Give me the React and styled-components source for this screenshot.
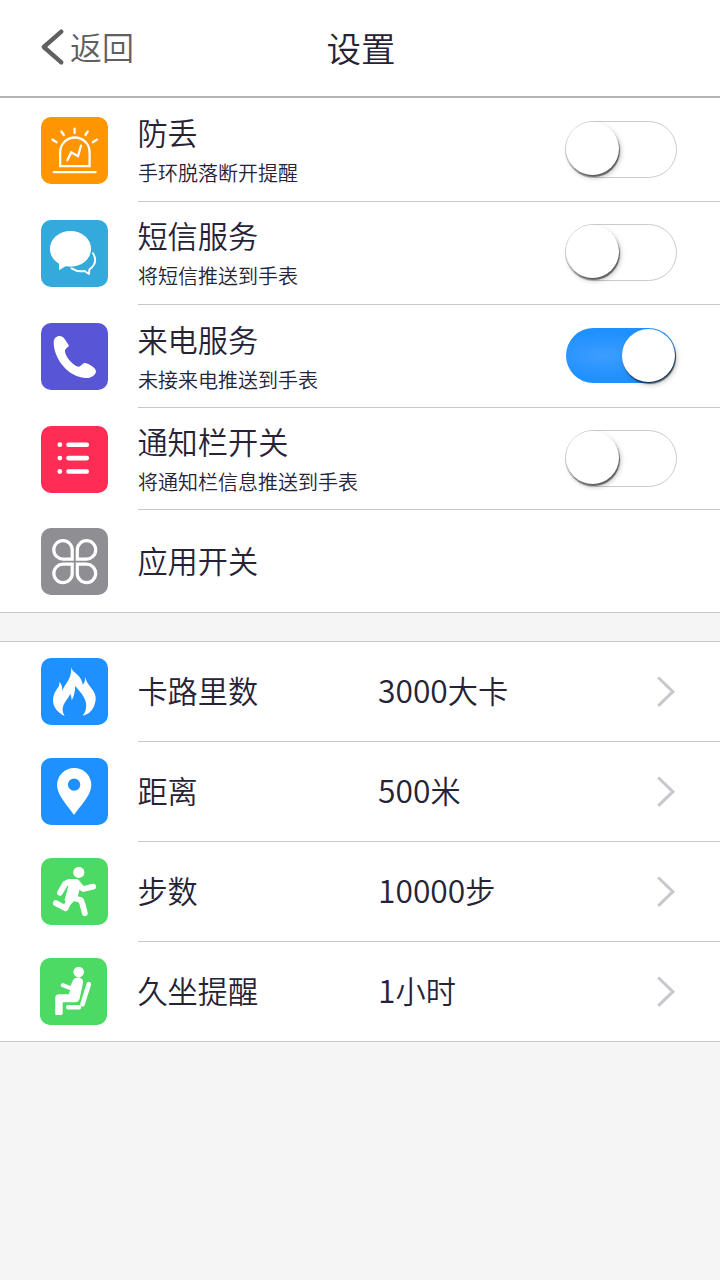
import React from "react";
import styled, { createGlobalStyle } from "styled-components";

const GlobalStyle = createGlobalStyle`
  *, *::before, *::after { box-sizing: border-box; }
  body {
    margin: 0;
    background: #f5f5f5;
    color: #262336;
    font-family: "Noto Sans CJK SC", sans-serif;
    font-weight: 350;
  }
`;

const Screen = styled.main`
  width: 720px;
  min-height: 1280px;
  background: #f5f5f5;
`;

const Header = styled.header`
  display: grid;
  grid-template-columns: 1fr auto 1fr;
  align-items: center;
  height: 98px;
  padding: 0 40px 2px;
  background: #fff;
  border-bottom: 2px solid #b2b2b7;
`;

const BackButton = styled.button`
  display: flex;
  align-items: center;
  gap: 4px;
  padding: 0;
  border: 0;
  background: none;
  color: #606060;
  font: inherit;
  font-size: 32px;
  line-height: 40px;
`;

const BackText = styled.span`
  padding-bottom: 3px;
`;

const Title = styled.h1`
  margin: 0;
  padding: 0 0 1px 2px;
  font-size: 34.5px;
  font-weight: inherit;
  line-height: 44px;
`;

const Group = styled.section`
  padding-top: ${(p) => p.$top || 0}px;
  background: #fff;
  border-top: ${(p) => (p.$lined ? "1px solid #c8c7cc" : "0")};
  border-bottom: 1px solid #c8c7cc;
  & + & { margin-top: 28px; }
`;

const Row = styled.div`
  display: flex;
  align-items: flex-start;
  height: ${(p) => p.$height}px;
  padding-left: ${(p) => 41 - (p.$shift || 0)}px;
`;

const Tile = styled.svg`
  flex: none;
  width: 67px;
  height: 67px;
  margin-top: ${(p) => p.$top}px;
  border-radius: 10px;
  background: ${(p) => p.$color};
  fill: #fff;
  stroke: none;
`;

const Body = styled.div`
  flex: 1;
  display: flex;
  align-items: ${(p) => (p.$center ? "center" : "flex-start")};
  height: 100%;
  margin-left: ${(p) => 30 + (p.$shift || 0)}px;
  padding: ${(p) => (p.$center ? "0" : `${p.$inset}px`)} 43px 0 0;
  border-bottom: ${(p) => (p.$last ? "0" : "1px solid #c8c7cc")};
`;

const Texts = styled.div`
  flex: 1;
`;

const Name = styled.div`
  margin-left: -0.6px;
  font-size: 30.2px;
  line-height: 40px;
  white-space: nowrap;
`;

const Note = styled.div`
  padding-top: 7px;
  font-size: 20px;
  line-height: 28px;
  white-space: nowrap;
`;

const Label = styled(Name)`
  width: 240.6px;
  padding-bottom: ${(p) => p.$lift}px;
`;

const Value = styled(Name)`
  flex: 1;
  margin-left: 0;
  padding-bottom: 4px;
`;

const Digits = styled.span`
  font-size: 31.8px;
`;

const Switch = styled.button`
  flex: none;
  display: flex;
  justify-content: ${(p) => (p.$on ? "flex-end" : "flex-start")};
  width: ${(p) => (p.$on ? 110 : 112)}px;
  height: ${(p) => (p.$on ? 55 : 57)}px;
  margin-top: 9px;
  margin-right: ${(p) => (p.$on ? 1 : 0)}px;
  padding: ${(p) => (p.$on ? "1px 1px 0 0" : "0")};
  border: ${(p) => (p.$on ? "0" : "1px solid #cbcbcb")};
  border-radius: 29px;
  background: ${(p) =>
    p.$on ? "radial-gradient(ellipse at 35% 50%, #3d9dff 0%, #1f90ff 60%)" : "#fff"};
`;

const Knob = styled.span`
  width: 53px;
  height: 53px;
  border-radius: 50%;
  background: #fff;
  box-shadow: 1px 2px 1px rgba(0, 0, 0, 0.55), 2px 3px 5px rgba(0, 0, 0, 0.22);
`;

const Line = styled.g`
  fill: none;
  stroke: #fff;
  stroke-width: ${(p) => p.$w};
  stroke-linecap: round;
  stroke-linejoin: round;
`;

const Arrow = styled.svg`
  flex: none;
  fill: none;
  stroke: ${(p) => p.$color};
  stroke-width: ${(p) => p.$w};
`;

const icons = {
  alarm: (
    <Line $w={2.3}>
      <path strokeLinejoin="miter" d="M19.2 49.2V35.2a14.7 14.7 0 0 1 29.4 0v14z" />
      <path d="M12.800 55.200h41.800M33.600 11.700v4.200M20.400 14.400l2.400 3.600M46.800 14.400l-2.400 3.600M11.400 22.600l4.200 2.600M56 22.600l-4.200 2.600" />
      <path d="M26.300 43.300l4-8 6.700 4 3-10.600" />
    </Line>
  ),
  chat: (
    <>
      <ellipse cx="29.500" cy="28.800" rx="20.600" ry="17.900" />
      <path d="M18 41v9.200l8.200-5z" />
      <Line $w={1.900}>
        <path d="M52 33.200c3.600 6 2.800 11.600-3.600 16.200l-.4 4.600-4.400-3c-5.200.8-9.400-.2-13-2.600" />
      </Line>
    </>
  ),
  phone: (
    <path d="M12.700 19.500C12.700 15 15.600 12.900 18.500 12.900c2.600 0 4.100 1.300 5.500 3.700l3.400 5.200c.6 1.100.4 1.700-.4 2.300-2 1.500-3.400 2.700-3 4.600 1.400 6 6.400 11.800 11.900 14.600 1.500.8 2.700.6 4-.8l2.300-2c1-.8 2-.7 3.200-.2 3.300 1.300 6.300 3 8.500 5.400 1.600 1.700 1.300 4.200-.4 6-2.300 2.500-5.500 3.500-9.200 3.300C27.500 54 12.700 36 12.700 19.500z" />
  ),
  list: (
    <>
      <circle cx="18.800" cy="18.700" r="2.400" />
      <circle cx="18.800" cy="32.100" r="2.400" />
      <circle cx="18.800" cy="45.500" r="2.400" />
      <Line $w={4.600}>
        <path d="M27.500 18.700h18.300M27.500 32.100h18.300M27.500 45.500h18.300" />
      </Line>
    </>
  ),
  clover: (
    <Line $w={3.200}>
      <path strokeLinejoin="miter" d="M31.200 31.100H22.100a9.200 9.200 0 1 1 9.100-9.200z" />
      <path strokeLinejoin="miter" d="M36.300 31.100h9.100a9.200 9.200 0 1 0-9.100-9.200z" />
      <path strokeLinejoin="miter" d="M31.200 36.200H22.100a9.200 9.200 0 1 0 9.100 9.200z" />
      <path strokeLinejoin="miter" d="M36.300 36.200h9.100a9.200 9.200 0 1 1-9.100 9.200z" />
    </Line>
  ),
  fire: (
    <path d="M30.200 9c.6 4 3.800 5 6.800 8.300 2.800 3 4.100 5.700 4.700 9.400 1.800-2 2.700-4.600 2.600-8 .6 4.800 3.200 7.800 5.700 11 3 3.700 5 7.300 4.700 11.500C54 49 50 55.600 41.700 57.700c3-4 4-8 3.300-12.500-1-6.700-6.500-12-10.700-17.200-.3 5.200-1 10.300-3.600 14.300-.2-2.300-.4-4.300-1.400-6.300-2 4.500-5.300 7.200-6.900 11.300-1.500 4-.8 7.300 1.300 10.700C16.500 54.800 12 49 12 42.300c0-5 2-8.800 5-12.800 1.400-1.900 1.600-3.700 1.300-5.800 2.400 2.500 3.300 5.500 3 9.600 1.200-4.300 3.800-7.300 6-11.100 2.500-4.500 3.200-8.200 2.900-13.200z" />
  ),
  pin: (
    <path
      fillRule="evenodd"
      d="M33.100 57C29 50 16.100 38 16.100 26.900a17.100 16.900 0 0 1 34.200 0C50.300 38 37.200 50 33.100 57zM33.100 20.400a6.200 6.200 0 1 0 0 12.400 6.200 6.200 0 0 0 0-12.400z"
    />
  ),
  run: (
    <>
      <circle cx="37.800" cy="14.400" r="5.600" />
      <path d="M27 21.200h8.500l4 7-3 11-7.500 8-5.500-5 4-15z" />
      <Line $w={5.800}>
        <path d="M18.900 34.800l5.300-9 4.800-2h6.500c2 2.500 3.500 5.500 6.800 7.200l9.900-2.400" />
        <path d="M28.500 42l-4 8.300-9.700-5.200M32 40l7.800 2c2 3.500 2.800 8.800 4 13.200" />
      </Line>
    </>
  ),
  sit: (
    <>
      <circle cx="38.700" cy="14.100" r="5.300" />
      <path d="M35.500 20c3.500-1.500 8 .4 7.600 4.500L39.800 40c-.7 2.900-2 4.200-4.500 4.200H22.700v11c0 1.200-.7 1.800-1.800 1.800h-4.100c-1 0-1.600-.6-1.600-1.600V40c0-2.400 1.400-3.800 3.600-3.800h9.800l1.600-3.900-8.200-3.300c-2.600-1.500-.9-4.400 1.600-3.700l6.800 2.800 2.200-5.100c.6-1.500 1.500-2.500 2.900-3z" />
      <Line $w={4.600}>
        <path d="M48.800 26.200l-6.300 20M28.200 49.200h10.800" />
      </Line>
    </>
  ),
};

const switchRows = [
  { icon: "alarm", color: "#ff9500", name: "防丢", note: "手环脱落断开提醒", height: 103 },
  { icon: "chat", color: "#34aadc", name: "短信服务", note: "将短信推送到手表", height: 103 },
  { icon: "phone", color: "#5856d6", name: "来电服务", note: "未接来电推送到手表", height: 103, on: true, inset: 14 },
  { icon: "list", color: "#ff2d55", name: "通知栏开关", note: "将通知栏信息推送到手表", height: 102 },
];

const goalRows = [
  { icon: "fire", color: "#1f90ff", name: "卡路里数", amount: "3000", unit: "大卡" },
  { icon: "pin", color: "#1f90ff", name: "距离", amount: "500", unit: "米" },
  { icon: "run", color: "#4cd964", name: "步数", amount: "10000", unit: "步" },
  { icon: "sit", color: "#4cd964", name: "久坐提醒", amount: "1", unit: "小时", shift: 1 },
];

function IconTile({ name, color, top }) {
  return (
    <Tile $color={color} $top={top} viewBox="0 0 67 67" aria-hidden="true">
      {icons[name]}
    </Tile>
  );
}

export default function App() {
  return (
    <Screen>
      <GlobalStyle />
      <Header>
        <BackButton>
          <Arrow $color="#606060" $w={4.4} width="26" height="38" viewBox="0 0 26 38" strokeLinecap="round" strokeLinejoin="round">
            <path d="M21.300 3.600L3.800 19l17.500 15.400" />
          </Arrow>
          <BackText>返回</BackText>
        </BackButton>
        <Title>设置</Title>
      </Header>

      <Group $top={1}>
        {switchRows.map((r) => (
          <Row key={r.icon} $height={r.height}>
            <IconTile name={r.icon} color={r.color} top={18} />
            <Body $inset={r.inset || 13}>
              <Texts>
                <Name>{r.name}</Name>
                <Note>{r.note}</Note>
              </Texts>
              <Switch $on={r.on} role="switch" aria-checked={!!r.on}>
                <Knob />
              </Switch>
            </Body>
          </Row>
        ))}
        <Row $height={102}>
          <IconTile name="clover" color="#8e8e93" top={18} />
          <Body $center $last>
            <Label $lift={2}>应用开关</Label>
          </Body>
        </Row>
      </Group>

      <Group $lined>
        {goalRows.map((r, i) => (
          <Row key={r.icon} $height={i === 3 ? 99 : 100} $shift={r.shift}>
            <IconTile name={r.icon} color={r.color} top={16} />
            <Body $center $last={i === 3} $shift={r.shift}>
              <Label $lift={4}>{r.name}</Label>
              <Value>
                <Digits>{r.amount}</Digits>
                {r.unit}
              </Value>
              <Arrow $color="#c7c7cc" $w={3} width="20" height="32" viewBox="0 0 20 32">
                <path d="M1.200 1.500L15.900 15.700 1.200 29.900" />
              </Arrow>
            </Body>
          </Row>
        ))}
      </Group>
    </Screen>
  );
}
